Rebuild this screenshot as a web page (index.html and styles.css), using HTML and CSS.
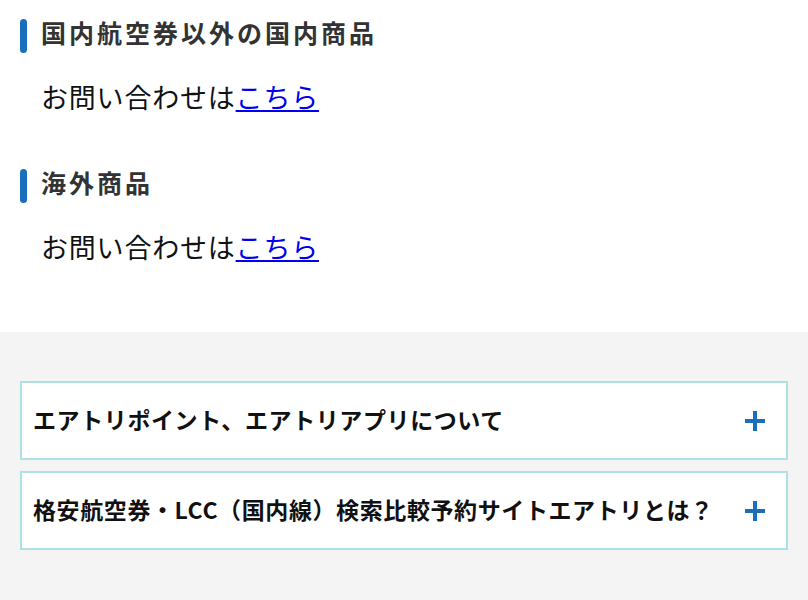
FILE: index.html
```html
<!DOCTYPE html>
<html lang="ja">
<head>
    <meta charset="UTF-8">
    <meta name="viewport" content="width=device-width, initial-scale=1.0">
    <title>お問い合わせ</title>
    <link rel="stylesheet" href="styles.css">
</head>
<body>
    <div class="contact">
        <h2 class="contact-title">国内航空券以外の国内商品</h2>
        <p class="contact-text">お問い合わせは<a href="#">こちら</a></p>

        <h2 class="contact-title">海外商品</h2>
        <p class="contact-text">お問い合わせは<a href="#">こちら</a></p>
    </div>

    <div class="faq">
        <div class="faq-item">
            <span class="faq-label">エアトリポイント、エアトリアプリについて</span>
            <span class="faq-plus"></span>
        </div>
        <div class="faq-item">
            <span class="faq-label">格安航空券・LCC（国内線）検索比較予約サイトエアトリとは？</span>
            <span class="faq-plus"></span>
        </div>
    </div>
</body>
</html>
```

FILE: styles.css
```css
body {
    margin: 0;
    background-color: #fff;
    font-family: "Noto Sans CJK JP", "Noto Sans", sans-serif;
}

.contact {
    padding: 19px 20px 64px;
}

.contact-title {
    display: flex;
    align-items: flex-start;
    gap: 14px;
    margin: 0;
    height: 34px;
    line-height: 26px;
    font-size: 25px;
    letter-spacing: 3px;
    font-weight: bold;
    color: #333;
}

.contact-title::before {
    content: "";
    width: 7px;
    height: 34px;
    border-radius: 4px;
    background-color: #1a6fbc;
    flex-shrink: 0;
}

.contact-title + .contact-text {
    margin: 25px 0 0 21px;
}

.contact-text {
    height: 40px;
    line-height: 38px;
    font-size: 27px;
    letter-spacing: 0.8px;
    color: #111;
}

.contact-text + .contact-title {
    margin-top: 51px;
}

.contact-text a {
    color: #0000ee;
}

/* accordion area */
.faq {
    background-color: #f4f4f4;
    padding: 49px 20px 60px;
    display: flex;
    flex-direction: column;
    gap: 11px;
}

.faq-item {
    display: flex;
    align-items: center;
    justify-content: space-between;
    height: 75px;
    padding: 0 21px 0 11px;
    border: 2px solid #ade1e4;
    background-color: #fff;
}

.faq-label {
    font-size: 23px;
    line-height: 32px;
    margin-top: -3px;
    font-weight: bold;
    letter-spacing: 0.6px;
    color: #111;
}

.faq-plus {
    position: relative;
    width: 20px;
    height: 20px;
    flex-shrink: 0;
}

.faq-plus::before,
.faq-plus::after {
    content: "";
    position: absolute;
    background-color: #1a6fbc;
}

.faq-plus::before {
    left: 0;
    top: 8px;
    width: 20px;
    height: 4px;
}

.faq-plus::after {
    left: 8px;
    top: 0;
    width: 4px;
    height: 20px;
}
```
